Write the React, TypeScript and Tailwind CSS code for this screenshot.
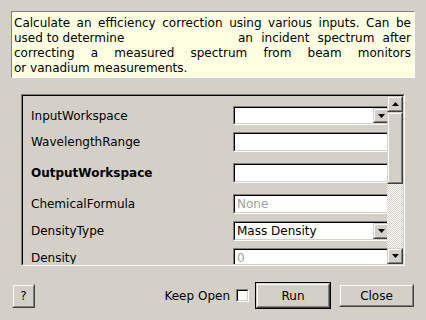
import React from 'react';

const Raised: React.FC<{ className?: string; children?: React.ReactNode }> = ({ className = '', children }) => (
  <div className={`border border-t-[#d4d0c8] border-l-[#d4d0c8] border-b-[#404040] border-r-[#404040] bg-[#d4d0c8] ${className}`}>
    <div className="w-full h-full border border-t-white border-l-white border-b-[#808080] border-r-[#808080] flex items-center justify-center">
      {children}
    </div>
  </div>
);

const Sunken: React.FC<{ className?: string; children?: React.ReactNode }> = ({ className = '', children }) => (
  <div className={`border border-t-[#808080] border-l-[#808080] border-b-white border-r-white ${className}`}>
    <div className="w-full h-full border border-t-[#000] border-l-[#000] border-b-[#d4d0c8] border-r-[#d4d0c8] bg-white flex items-center relative overflow-hidden">
      {children}
    </div>
  </div>
);

const DownArrow = () => (
  <svg width="7" height="4" viewBox="0 0 7 4"><path d="M0 0h7L3.5 4z" fill="#000" /></svg>
);
const UpArrow = () => (
  <svg width="7" height="4" viewBox="0 0 7 4"><path d="M0 4h7L3.5 0z" fill="#000" /></svg>
);

interface Row {
  label: string;
  bold?: boolean;
  value?: string;
  muted?: boolean;
  combo?: boolean;
  mt: string;
  h: string;
}

const rows: Row[] = [
  { label: 'InputWorkspace', combo: true, mt: 'mt-[10px]', h: 'h-[19px]' },
  { label: 'WavelengthRange', mt: 'mt-[7px]', h: 'h-[20px]' },
  { label: 'OutputWorkspace', bold: true, mt: 'mt-[11px]', h: 'h-[20px]' },
  { label: 'ChemicalFormula', value: 'None', muted: true, mt: 'mt-[11px]', h: 'h-[20px]' },
  { label: 'DensityType', value: 'Mass Density', combo: true, mt: 'mt-[7px]', h: 'h-[20px]' },
  { label: 'Density', value: '0', muted: true, mt: 'mt-[7px]', h: 'h-[20px]' },
];

const Line: React.FC<{ words: string[] }> = ({ words }) => (
  <div className="flex justify-between h-[15px] leading-[15px] whitespace-nowrap">
    {words.map((w, i) => (
      <span key={i}>{w}</span>
    ))}
  </div>
);

export default function App() {
  return (
    <div className="w-[426px] h-[320px] bg-[#d4d0c8] overflow-hidden font-['DejaVu_Sans',sans-serif] text-[12px] text-black pt-[11px]">
      {/* description */}
      <div className="mx-[11px] h-[67px] bg-[#ffffe1] border border-t-[#808080] border-l-[#808080] border-b-white border-r-white pt-[4px] pl-[2px] pr-[3px]">
        <Line words={['Calculate', 'an', 'efficiency', 'correction', 'using', 'various', 'inputs.', 'Can', 'be']} />
        <div className="flex h-[15px] leading-[15px] whitespace-nowrap">
          <span className="w-[224px]">used to determine</span>
          <span className="flex-1 flex justify-between">
            <span>an</span><span>incident</span><span>spectrum</span><span>after</span>
          </span>
        </div>
        <Line words={['correcting', 'a', 'measured', 'spectrum', 'from', 'beam', 'monitors']} />
        <div className="h-[15px] leading-[15px]">or vanadium measurements.</div>
      </div>

      {/* property frame */}
      <div className="mt-[16px] ml-[21px] w-[384px] h-[172px] border border-t-[#808080] border-l-[#808080] border-b-white border-r-white">
        <div className="w-full h-full border border-t-[#000] border-l-[#000] border-b-[#d4d0c8] border-r-[#d4d0c8] flex">
          <div className="flex-1 overflow-hidden pl-[8px]">
            {rows.map((r) => (
              <div key={r.label} className={`flex items-center ${r.mt} ${r.h}`}>
                <span className={`w-[202px] shrink-0 ${r.bold ? 'font-bold' : ''}`}>{r.label}</span>
                <Sunken className={`w-[158px] shrink-0 ${r.h}`}>
                  {r.value && (
                    <span className={`pl-[2px] ${r.muted ? 'text-[#a0a0a0]' : 'text-black'}`}>{r.value}</span>
                  )}
                  {r.combo && (
                    <Raised className="absolute right-0 top-0 w-[16px] h-full">
                      <DownArrow />
                    </Raised>
                  )}
                </Sunken>
              </div>
            ))}
          </div>
          {/* scrollbar */}
          <div className="w-[16px] flex flex-col">
            <Raised className="h-[16px] w-[16px]"><UpArrow /></Raised>
            <Raised className="h-[72px] w-[16px]" />
            <div className="flex-1 bg-[repeating-conic-gradient(#d4d0c8_0_25%,#ffffff_0_50%)] bg-[length:2px_2px]" />
            <Raised className="h-[16px] w-[16px]"><DownArrow /></Raised>
          </div>
        </div>
      </div>

      {/* buttons */}
      <div className="mt-[16px] h-[27px] flex items-center pr-[12px]">
        <Raised className="ml-[12px] w-[23px] h-[24px]">
          <span className="text-[12px]">?</span>
        </Raised>
        <div className="flex-1" />
        <span>Keep Open</span>
        <div className="ml-[6px] w-[13px] h-[13px] border border-t-[#808080] border-l-[#808080] border-b-white border-r-white">
          <div className="w-full h-full border border-t-[#000] border-l-[#000] border-b-[#d4d0c8] border-r-[#d4d0c8] bg-white" />
        </div>
        <div className="ml-[6px] border border-black">
          <Raised className="w-[74px] h-[25px]">Run</Raised>
        </div>
        <Raised className="ml-[8px] w-[75px] h-[23px]">Close</Raised>
      </div>
    </div>
  );
}
